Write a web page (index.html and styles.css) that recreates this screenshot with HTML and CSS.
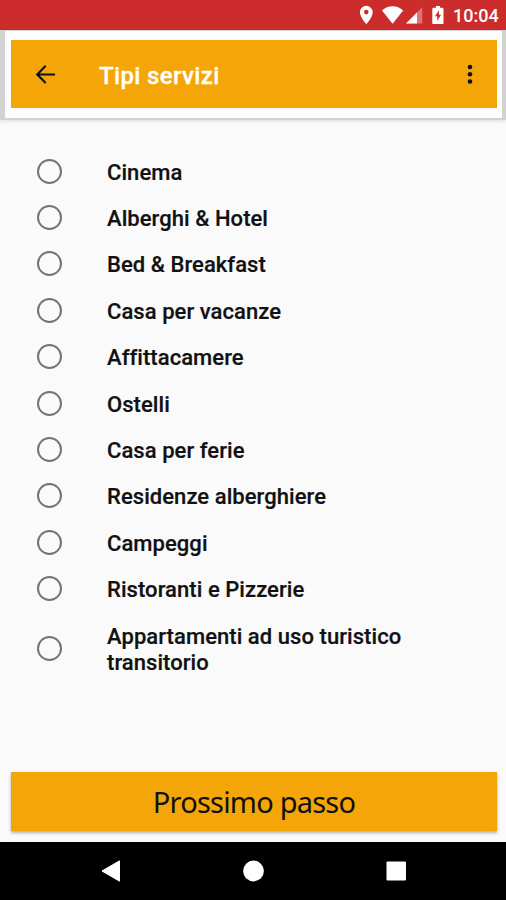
FILE: index.html
```html
<!DOCTYPE html>
<html lang="it">
<head>
<meta charset="utf-8">
<title>Tipi servizi</title>
<link rel="stylesheet" href="styles.css">
</head>
<body>
<div class="statusbar">
  <svg class="status-icons" width="86" height="30" viewBox="0 0 86 30" fill="#fff">
    <path fill-rule="evenodd" d="M6.3 5.8a6.4 6.4 0 0 0-6.4 6.4c0 4.8 6.4 12 6.4 12s6.4-7.2 6.4-12a6.4 6.4 0 0 0-6.4-6.4zm0 4a2.3 2.3 0 1 1 0 4.6 2.3 2.3 0 0 1 0-4.6z"/>
    <path d="M22 10.6C27.500 4.900 37.500 4.900 43.200 10.600L32.600 23.800z"/>
    <path d="M62.200 7.300V23.600H46z" opacity=".35"/>
    <path d="M57 12.500V23.600H46z"/>
    <path fill-rule="evenodd" d="M76 6h4v1.700h2.300q1.200 0 1.200 1.200v14q0 1.200-1.200 1.200h-8.800q-1.200 0-1.200-1.200v-14q0-1.200 1.200-1.200H76zm2.900 4.300-3.900 6h2.200v4.700l3.900-6.300h-2.200z"/>
  </svg>
  <span class="clock">10:04</span>
</div>
<header class="frame">
  <div class="toolbar">
    <svg class="back" width="22" height="20" viewBox="0 0 22 20" fill="none" stroke="#111" stroke-width="2.100"><path d="M20 10.500H2M10.700 1.800 2.200 10.500l8.500 8.600"/></svg>
    <h1 class="title">Tipi servizi</h1>
    <svg class="more" width="6" height="20" viewBox="0 0 6 20" fill="#111"><circle cx="3" cy="3" r="2.300"/><circle cx="3" cy="10.200" r="2.300"/><circle cx="3" cy="17.500" r="2.300"/></svg>
  </div>
</header>
<main class="list">
  <label class="row"><i class="radio"></i><span>Cinema</span></label>
  <label class="row"><i class="radio"></i><span>Alberghi &amp; Hotel</span></label>
  <label class="row"><i class="radio"></i><span>Bed &amp; Breakfast</span></label>
  <label class="row"><i class="radio"></i><span>Casa per vacanze</span></label>
  <label class="row"><i class="radio"></i><span>Affittacamere</span></label>
  <label class="row"><i class="radio"></i><span>Ostelli</span></label>
  <label class="row"><i class="radio"></i><span>Casa per ferie</span></label>
  <label class="row"><i class="radio"></i><span>Residenze alberghiere</span></label>
  <label class="row"><i class="radio"></i><span>Campeggi</span></label>
  <label class="row"><i class="radio"></i><span>Ristoranti e Pizzerie</span></label>
  <label class="row tall"><i class="radio"></i><span>Appartamenti ad uso turistico transitorio</span></label>
</main>
<button class="next"><span>Prossimo passo</span></button>
<nav class="navbar">
  <svg width="506" height="58" viewBox="0 0 506 58" fill="#fff"><path d="M102 29 119.500 18.800V39.200z" stroke="#fff" stroke-linejoin="round"/><circle cx="253.500" cy="29" r="10.400"/><rect x="386.500" y="19.500" width="19.500" height="19" rx="1"/></svg>
</nav>
</body>
</html>
```

FILE: styles.css
```css
* { box-sizing: border-box; }
body {
  margin: 0;
  width: 506px;
  height: 900px;
  display: flex;
  flex-direction: column;
  background: #fafafa;
  font-family: Roboto, "Liberation Sans", sans-serif;
  color: #111;
  overflow: hidden;
}
.statusbar {
  height: 30px;
  flex: none;
  background: #cd2c2c;
  display: flex;
  align-items: center;
  padding-left: 360px;
}
.status-icons { flex: none; }
.clock {
  margin-left: 7px;
  color: #fff;
  font-size: 18px;
  font-weight: 500;
  line-height: 30px;
  padding-top: 2px;
}
.frame {
  height: 90px;
  flex: none;
  background: #fdfdfd;
  border: solid #d2d2d2;
  border-width: 1px 4px 2px 5px;
  padding: 9px 5px 10px 6px;
  box-shadow: 0 1px 4px rgba(0, 0, 0, .12);
}
.toolbar {
  height: 68px;
  background: #f4a608;
  display: flex;
  align-items: center;
  padding: 0 24px;
}
.title {
  margin: 0 auto 0 42px;
  padding-top: 3px;
  color: #fff;
  font-size: 24px;
  line-height: 30px;
  font-weight: 500;
  letter-spacing: .35px;
  -webkit-text-stroke: .3px #fff;
}
.list {
  flex: 1;
  padding: 28px 38px 0 37px;
}
.row {
  display: flex;
  align-items: center;
  height: 46.4px;
  font-size: 22px;
  line-height: 26px;
  font-weight: 500;
  letter-spacing: .06px;
}
.row span {
  padding-top: 3px;
  width: 310px;
  -webkit-text-stroke: .2px #111;
}
.row.tall { height: 73px; }
.radio {
  flex: none;
  width: 25px;
  height: 25px;
  margin-right: 45px;
  border: 2px solid #747474;
  border-radius: 50%;
}
.next {
  flex: none;
  width: 486px;
  height: 59px;
  margin: 0 0 11px 11px;
  padding: 0;
  border: 0;
  background: #f4a608;
  box-shadow: 0 2px 3px rgba(0, 0, 0, .3);
  font: 400 29px/58px "Noto Sans", sans-serif;
  letter-spacing: -.78px;
  color: #111;
}
.navbar {
  flex: none;
  height: 58px;
  background: #000;
}
.navbar svg { display: block; }
```
